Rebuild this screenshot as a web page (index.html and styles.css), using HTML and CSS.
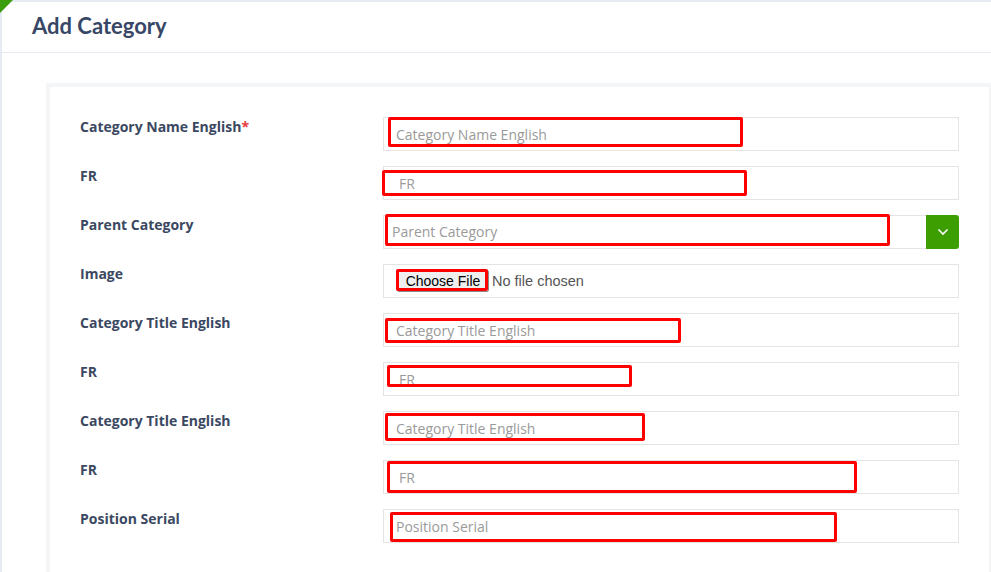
FILE: index.html
```html
<!DOCTYPE html>
<html lang="en">
<head>
<meta charset="utf-8">
<title>Add Category</title>
<link rel="stylesheet" href="styles.css">
</head>
<body>
<div class="page">
  <span class="corner"></span>
  <header class="page-head">
    <h1 class="page-title">Add Category</h1>
  </header>
  <main class="content">
    <form class="card">
      <div class="row">
        <label class="label">Category Name English<span class="req">*</span></label>
        <div class="field">
          <input class="input pad-13" type="text" placeholder="Category Name English">
          <span class="mark mark-1"></span>
        </div>
      </div>
      <div class="row">
        <label class="label">FR</label>
        <div class="field">
          <input class="input pad-16" type="text" placeholder="FR">
          <span class="mark mark-2"></span>
        </div>
      </div>
      <div class="row">
        <label class="label">Parent Category</label>
        <div class="field select-field">
          <div class="input select-box pad-9"><span class="ph">Parent Category</span></div>
          <span class="select-btn">
            <svg width="12" height="8" viewBox="0 0 12 8"><path d="M1.5 1.5 L6 6 L10.5 1.5" fill="none" stroke="#fff" stroke-width="1.6"/></svg>
          </span>
          <span class="mark mark-3"></span>
        </div>
      </div>
      <div class="row">
        <label class="label">Image</label>
        <div class="field">
          <div class="input file-box">
            <span class="file-btn">Choose File</span>
            <span class="file-text">No file chosen</span>
          </div>
          <span class="mark mark-4"></span>
        </div>
      </div>
      <div class="row">
        <label class="label">Category Title English</label>
        <div class="field">
          <input class="input pad-13" type="text" placeholder="Category Title English">
          <span class="mark mark-5"></span>
        </div>
      </div>
      <div class="row">
        <label class="label">FR</label>
        <div class="field">
          <input class="input pad-16" type="text" placeholder="FR">
          <span class="mark mark-6"></span>
        </div>
      </div>
      <div class="row">
        <label class="label">Category Title English</label>
        <div class="field">
          <input class="input pad-13" type="text" placeholder="Category Title English">
          <span class="mark mark-7"></span>
        </div>
      </div>
      <div class="row">
        <label class="label">FR</label>
        <div class="field">
          <input class="input pad-16" type="text" placeholder="FR">
          <span class="mark mark-8"></span>
        </div>
      </div>
      <div class="row">
        <label class="label">Position Serial</label>
        <div class="field">
          <input class="input pad-13" type="text" placeholder="Position Serial">
          <span class="mark mark-9"></span>
        </div>
      </div>
    </form>
  </main>
</div>
</body>
</html>
```

FILE: styles.css
```css
* { box-sizing: border-box; }
html, body { margin: 0; padding: 0; }
body {
  background: #ffffff;
  font-family: "Open Sans", "Liberation Sans", sans-serif;
  width: 991px;
  height: 572px;
  overflow: hidden;
}
.page {
  position: relative;
  border-top: 2px solid #e9ebf2;
  border-left: 2px solid #e6eaf3;
  min-height: 572px;
}
.corner {
  position: absolute;
  left: -2px;
  top: -2px;
  width: 0;
  height: 0;
  border-top: 13px solid #3a9e0c;
  border-right: 13px solid transparent;
}
.page-head {
  height: 51px;
  border-bottom: 1px solid #e9eaf1;
  display: flex;
  align-items: center;
  padding-left: 30px;
}
.page-title {
  margin: 0;
  font-family: "Lato", "Open Sans", sans-serif;
  font-weight: 700;
  font-size: 22px;
  color: #394766;
  position: relative;
  top: -2px;
}
.content {
  padding: 30px 0 0 44px;
}
.card {
  border: 4px solid #f4f5f7;
  border-right-width: 2px;
  width: 945px;
  padding: 30px 30px 30px 30px;
  display: flex;
  flex-direction: column;
  gap: 15px;
}
.row {
  display: grid;
  grid-template-columns: 303px 576px;
  align-items: start;
}
.label {
  font-size: 14px;
  font-weight: 700;
  color: #3b4862;
  line-height: 20px;
}
.req { color: #e8383d; }
.field {
  position: relative;
  height: 34px;
}
.input {
  display: block;
  width: 100%;
  height: 34px;
  border: 1px solid #e4e4e4;
  background: #fff;
  font-family: "Open Sans", sans-serif;
  font-size: 14px;
  color: #555;
  outline: none;
  margin: 0;
}
.input::placeholder { color: #9a9a9a; opacity: 1; }
.pad-13 { padding: 0 0 0 12px; }
.pad-16 { padding: 0 0 0 15px; }
.pad-9 { padding: 0 0 1px 8px; }
.select-field { display: flex; }
.select-box {
  flex: 1;
  display: flex;
  align-items: center;
  border-right: none;
}
.ph { color: #9a9a9a; }
.select-btn {
  width: 33px;
  height: 34px;
  background: #3c9e00;
  border-radius: 0 3px 3px 0;
  display: flex;
  align-items: center;
  justify-content: center;
}
.file-box {
  display: flex;
  align-items: center;
  padding-left: 13px;
}
.file-btn {
  font-family: "Liberation Sans", Arial, sans-serif;
  font-size: 14px;
  color: #000;
  background: #efefef;
  border: 1px solid #8a8a8a;
  border-radius: 2px;
  height: 22px;
  line-height: 20px;
  width: 92px;
  text-align: center;
}
.file-text {
  font-family: "Liberation Sans", Arial, sans-serif;
  font-size: 14.5px;
  color: #555;
  margin-left: 3px;
}
.mark {
  position: absolute;
  border: 3px solid #ff0000;
  border-radius: 2px;
  pointer-events: none;
}
.mark-1 { left: 5px; top: 0; width: 355px; height: 30px; }
.mark-2 { left: -1px; top: 4px; width: 365px; height: 26px; }
.mark-3 { left: 2px; top: -1px; width: 505px; height: 32px; }
.mark-4 { left: 13px; top: 5px; width: 92px; height: 22px; }
.mark-5 { left: 2px; top: 5px; width: 296px; height: 25px; }
.mark-6 { left: 4px; top: 3px; width: 245px; height: 22px; }
.mark-7 { left: 2px; top: 2px; width: 260px; height: 28px; }
.mark-8 { left: 4px; top: 1px; width: 470px; height: 32px; }
.mark-9 { left: 7px; top: 3px; width: 447px; height: 30px; }
```
